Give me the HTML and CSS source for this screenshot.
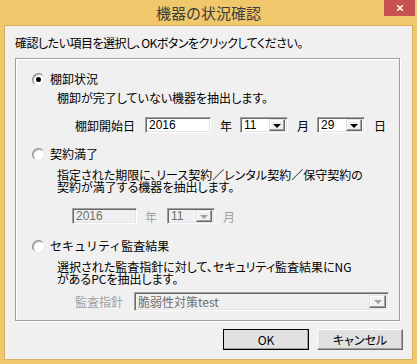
FILE: index.html
```html
<!DOCTYPE html>
<html>
  <head>
    <title>機器の状況確認</title>
    <link rel="stylesheet" href="styles.css">
  </head>
  <body>
    <div class="window">
      <div class="titlebar">
        <span class="title">機器の状況確認</span>
        <!-- close button -->
        <span class="close-btn">
          <svg viewBox="0 0 10 10" width="10" height="10">
            <path d="M1.5 1.5l7 7M8.5 1.5l-7 7" stroke="#fff" stroke-width="2" />
          </svg>
        </span>
      </div>
      <div class="client">
        <div class="intro">確認したい項目を選択し、OKボタンをクリックしてください。</div>

        <div class="groupbox">
          <div class="radio-row">
            <span class="radio checked"></span>
            <span>棚卸状況</span>
          </div>
          <div class="desc one-line">棚卸が完了していない機器を抽出します。</div>
          <div class="field-row date-row">
            <span class="field-label">棚卸開始日</span>
            <span class="textbox year">2016</span>
            <span class="unit">年</span>
            <span class="combo month">
              <span class="combo-value">11</span>
              <span class="drop-btn"><span class="tri"></span></span>
            </span>
            <span class="unit">月</span>
            <span class="combo month">
              <span class="combo-value">29</span>
              <span class="drop-btn"><span class="tri"></span></span>
            </span>
            <span class="unit">日</span>
          </div>

          <div class="radio-row second">
            <span class="radio"></span>
            <span>契約満了</span>
          </div>
          <div class="desc">
            指定された期限に、リース契約／レンタル契約／保守契約の<br>契約が満了する機器を抽出します。
          </div>
          <div class="field-row contract-row disabled">
            <span class="textbox year">2016</span>
            <span class="unit">年</span>
            <span class="combo month">
              <span class="combo-value">11</span>
              <span class="drop-btn"><span class="tri"></span></span>
            </span>
            <span class="unit">月</span>
          </div>

          <div class="radio-row third">
            <span class="radio"></span>
            <span>セキュリティ監査結果</span>
          </div>
          <div class="desc">
            選択された監査指針に対して、セキュリティ監査結果にNG<br>があるPCを抽出します。
          </div>
          <div class="field-row audit-row disabled">
            <span class="field-label">監査指針</span>
            <span class="combo policy">
              <span class="combo-value">脆弱性対策test</span>
              <span class="drop-btn"><span class="tri"></span></span>
            </span>
          </div>
        </div>

        <div class="buttons">
          <button class="btn default">OK</button>
          <button class="btn">キャンセル</button>
        </div>
      </div>
    </div>
  </body>
</html>
```

FILE: styles.css
```css
:root {
  --frame: #f0c86b;
  --face: #f0f0f0;
  --text: #000;
  --disabled: #6d6d6d;
  --disabled-light: #a0a0a0;
  --font: "Noto Sans CJK JP", "Noto Sans", sans-serif;
}

html,
body {
  margin: 0;
  padding: 0;
  background: var(--frame);
}

.window {
  width: 417px;
  height: 364px;
  display: flex;
  flex-direction: column;
  background: var(--frame);
  font-family: var(--font);
  font-size: 12px;
  color: var(--text);
  position: relative;
}

.titlebar {
  height: 25px;
  display: flex;
  align-items: center;
  justify-content: center;
}

.title {
  font-size: 15px;
  color: #3c3c3c;
  line-height: 16px;
  margin-top: 1px;
}

.close-btn {
  position: absolute;
  top: 0;
  right: 2px;
  width: 31px;
  height: 16px;
  background: #c75050;
  display: flex;
  align-items: center;
  justify-content: center;
}

.close-btn svg {
  width: 8px;
  height: 8px;
}

.client {
  flex: 1;
  margin: 0 4px 4px 4px;
  background: var(--face);
  border: 1px solid #d8b35e;
  border-top-color: #d4ae58;
  padding: 10px 12px 0 10px;
  display: flex;
  flex-direction: column;
}

.intro {
  line-height: 14px;
  height: 14px;
  font-feature-settings: "palt";
  letter-spacing: -0.5px;
}

/* etched group frame */
.groupbox {
  margin-top: 8px;
  border: 1px solid #a0a0a0;
  box-shadow: inset 1px 1px 0 #fff, 1px 1px 0 #fff;
  padding: 13px 0 9px 16px;
  display: flex;
  flex-direction: column;
}

.radio-row {
  display: flex;
  align-items: center;
  height: 14px;
  line-height: 14px;
  gap: 5px;
}
.radio-row.second {
  margin-top: 14px;
}
.radio-row.third {
  margin-top: 15px;
}

.radio {
  width: 11px;
  height: 11px;
  border-radius: 50%;
  background: #fff;
  border: 1px solid;
  border-color: #8a8a8a #e6e6e6 #e6e6e6 #8a8a8a;
  box-shadow: inset 1px 1px 0 #b8b8b8;
  position: relative;
  flex: none;
}
.radio.checked::after {
  content: "";
  position: absolute;
  left: 3px;
  top: 3px;
  width: 5px;
  height: 5px;
  border-radius: 50%;
  background: #000;
}

.desc {
  margin-left: 25px;
  margin-top: 8px;
  line-height: 12px;
  font-feature-settings: "palt";
}
.desc.one-line {
  margin-top: 5px;
  line-height: 14px;
}

.field-row {
  display: flex;
  align-items: center;
  height: 16px;
}

.date-row {
  margin-top: 12px;
  padding-left: 43px;
}

.field-label {
  width: 70px;
  flex: none;
}

.textbox,
.combo {
  height: 16px;
  box-sizing: border-box;
  background: #fff;
  border: 1px solid;
  border-color: #a0a0a0 #fff #fff #a0a0a0;
  box-shadow: inset 1px 1px 0 #696969, inset -1px -1px 0 #e3e3e3;
  display: flex;
  align-items: center;
  line-height: 14px;
  padding-left: 3px;
  font-family: "Liberation Sans", var(--font);
  font-size: 12px;
}

.textbox.year {
  width: 66px;
}

.combo {
  padding-right: 2px;
}
.combo.month {
  width: 48px;
}
.combo-value {
  flex: 1;
}

.drop-btn {
  width: 16px;
  height: 12px;
  box-sizing: border-box;
  background: #f0f0f0;
  border: 1px solid;
  border-color: #e3e3e3 #696969 #696969 #e3e3e3;
  box-shadow: inset -1px -1px 0 #a0a0a0, inset 1px 1px 0 #fff;
  display: flex;
  align-items: center;
  justify-content: center;
}
.tri {
  width: 0;
  height: 0;
  border-left: 4px solid transparent;
  border-right: 4px solid transparent;
  border-top: 4px solid #000;
  margin-top: 1px;
}

.unit {
  margin: 0 8px 0 9px;
}

.contract-row {
  margin-top: 15px;
  padding-left: 40px;
}
.contract-row .textbox.year {
  width: 65px;
}
.contract-row .unit {
  margin: 0 10px 0 8px;
}

.disabled .textbox,
.disabled .combo {
  background: var(--face);
  color: var(--disabled);
}
.disabled .unit,
.disabled .field-label {
  color: var(--disabled-light);
}
.disabled .tri {
  border-top-color: #a0a0a0;
}

.audit-row {
  margin-top: 7px;
  padding-left: 43px;
  height: 19px;
}
.audit-row .field-label {
  width: 59px;
}
.combo.policy {
  width: 255px;
  height: 19px;
  font-family: var(--font);
}
.combo.policy .drop-btn {
  height: 13px;
  width: 17px;
}

.buttons {
  display: flex;
  justify-content: flex-end;
  gap: 8px;
  margin-top: 8px;
  margin-right: -3px;
}

.btn {
  width: 86px;
  height: 21px;
  padding: 0;
  font-family: var(--font);
  font-size: 12px;
  color: #000;
  background: #e1e1e1;
  border: 1px solid;
  border-color: #fff #696969 #696969 #fff;
  box-shadow: inset -1px -1px 0 #a0a0a0, inset 1px 1px 0 #e3e3e3;
  font-feature-settings: "palt";
}
.btn.default {
  outline: 1px solid #000;
  outline-offset: -1px;
  border-color: #fff #404040 #404040 #fff;
}
```
